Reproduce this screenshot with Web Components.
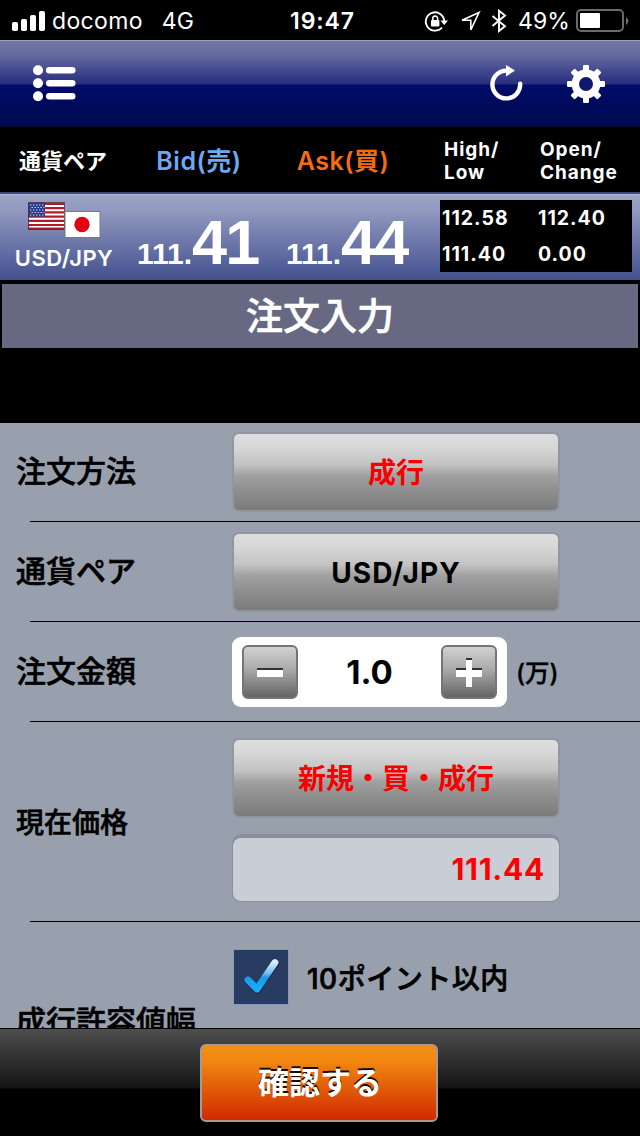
<!DOCTYPE html>
<html lang="ja">
<head>
<meta charset="utf-8">
<title>注文入力</title>
<style>
html, body {
  margin: 0;
  background: #000;
}
body {
  font-family: Inter, "Noto Sans CJK JP", sans-serif;
  width: 640px;
  height: 1136px;
  overflow: hidden;
}
</style>
</head>
<body>
<order-app></order-app>

<script>
"use strict";

function define(tag, html) {
  const template = document.createElement("template");
  template.innerHTML = html;

  customElements.define(
    tag,
    class extends HTMLElement {
      constructor() {
        super();
        this.attachShadow({ mode: "open" });
        this.shadowRoot.appendChild(template.content.cloneNode(true));
      }
    }
  );
}

define(
  "status-bar",
  `
  <style>
  :host {
    display: grid;
    grid-template-columns: 1fr auto 1fr;
    align-items: center;
    height: 40px;
    color: #fff;
    background: #000;
    font-size: 23px;
    line-height: 42px;
    white-space: nowrap;
  }
  svg { display: block; }
  .left, .right { display: flex; align-items: center; }
  .left { padding-left: 12px; }
  .carrier { margin-left: 7px; letter-spacing: 0.35px; }
  .net { margin-left: 19px; }
  .time { font-weight: 600; letter-spacing: 0.9px; padding-left: 5px; }
  .right { justify-content: flex-end; padding-right: 11px; }
  .pct { margin: 0 6px 0 11px; letter-spacing: 0.1px; }
  </style>
  <div class="left">
    <svg width="33" height="20" viewBox="0 0 33 20" fill="#fff">
      <rect x="0" y="11" width="6" height="9" rx="1.8"/>
      <rect x="9" y="8" width="6" height="12" rx="1.8"/>
      <rect x="18" y="4" width="6" height="16" rx="1.8"/>
      <rect x="27" y="0" width="6" height="20" rx="1.8"/>
    </svg>
    <span class="carrier">docomo</span>
    <span class="net">4G</span>
  </div>
  <span class="time">19:47</span>
  <div class="right">
    <svg width="84" height="24" viewBox="0 0 84 24" fill="none" stroke="#fff">
      <path d="M19 18.500A9.200 9.200 0 1 1 21.200 12" stroke-width="1.8"/>
      <path d="M17.400 11.500H25L21.200 16Z" fill="#fff" stroke="none"/>
      <rect x="8" y="11" width="8.400" height="6.400" rx="1" fill="#fff" stroke="none"/>
      <path d="M9.800 11.500V9.400a2.400 2.400 0 0 1 4.800 0V11.500" stroke-width="1.5"/>
      <path d="M56 3.500 39 11.200H47.800V20.800Z" stroke-width="1.6"/>
      <path d="M69.500 7 82 17.200 76 22V1.800L82 6.500 69.500 17" stroke-width="1.9"/>
    </svg>
    <span class="pct">49%</span>
    <svg width="53" height="24" viewBox="0 0 53 24">
      <rect x="1" y="1" width="46" height="21" rx="4" fill="none" stroke="#6b6b6b" stroke-width="2"/>
      <rect x="4" y="4" width="20" height="15" rx="1" fill="#fff"/>
      <path d="M50 8Q55 12 50 16Z" fill="#6b6b6b"/>
    </svg>
  </div>`
);

define(
  "nav-bar",
  `
  <style>
  :host {
    display: flex;
    align-items: center;
    box-sizing: border-box;
    height: 87px;
    padding: 0 35px 0 33px;
    border-top: 1px solid #9ea0b7;
    border-bottom: 1px solid #000530;
    background: linear-gradient(#7377a3 0, #6468a0 15px, #262d7e 43px, #000c68 44px, #00094f 100%);
  }
  svg { display: block; }
  .gap { flex: 1; }
  .gear { margin-left: 44px; }
  </style>
  <svg width="43" height="37" viewBox="0 0 43 37" fill="#fff">
    <circle cx="5" cy="5.2" r="5"/><circle cx="5" cy="18.2" r="5"/><circle cx="5" cy="31.2" r="5"/>
    <rect x="13" y="2" width="29.5" height="6.6" rx="3.3"/>
    <rect x="13" y="15" width="29.5" height="6.6" rx="3.3"/>
    <rect x="13" y="28" width="29.5" height="6.6" rx="3.3"/>
  </svg>
  <span class="gap"></span>
  <svg width="33" height="37" viewBox="0 0 33 37">
    <path d="M30.200 18.800A13.900 13.900 0 1 1 16.300 5.600" fill="none" stroke="#fff" stroke-width="4.4" stroke-linecap="round"/>
    <path d="M16 0 25 5.600 16 11.600Z" fill="#fff"/>
  </svg>
  <svg class="gear" width="38" height="38" viewBox="-19 -19 38 38" fill="#fff">
    <rect x="-3" y="-19" width="6" height="38" rx="1.2"/>
    <rect x="-19" y="-3" width="38" height="6" rx="1.2"/>
    <rect x="-3" y="-19" width="6" height="38" rx="1.2" transform="rotate(45)"/>
    <rect x="-3" y="-19" width="6" height="38" rx="1.2" transform="rotate(-45)"/>
    <circle r="14.4"/>
    <circle r="7" fill="#10186c"/>
  </svg>`
);

define(
  "rate-header",
  `
  <style>
  :host {
    display: grid;
    grid-template-columns: 126px 146px 142px 96px 1fr;
    align-items: center;
    height: 65px;
    color: #fff;
    background: #000;
    font-weight: 600;
    text-align: center;
  }
  .pair { font-size: 22px; margin-top: -2px; }
  .bid, .ask {
    font-size: 25px;
    letter-spacing: 0.5px;
    margin-top: -1px;
  }
  .bid { color: #6ea8f2; }
  .ask { color: #f36c12; }
  .small {
    font-size: 19px;
    font-weight: 700;
    line-height: 23px;
    letter-spacing: 0.95px;
    text-align: left;
    padding: 3px 0 0 30px;
  }
  </style>
  <span class="pair">通貨ペア</span>
  <span class="bid">Bid(売)</span>
  <span class="ask">Ask(買)</span>
  <span class="small">High/<br>Low</span>
  <span class="small">Open/<br>Change</span>`
);

define(
  "flag-pair",
  `
  <style>
  :host { display: block; }
  svg { display: block; }
  </style>
  <svg width="73" height="37" viewBox="0 0 73 37">
    <rect x=".5" y=".5" width="36" height="27" fill="#fff"/>
    <path d="M0 2h36M0 6.200h36M0 10.400h36M0 14.600h36M0 18.800h36M0 23h36M0 26.600h36" stroke="#b01c2c" stroke-width="2.2"/>
    <rect x=".5" y=".5" width="16.5" height="14" fill="#2b3a8c"/>
    <path d="M2 3h15M3.500 5.500h13M2 8h15M3.500 10.500h13M2 13h15" stroke="#dfe3f4" stroke-width="1.2" stroke-dasharray="1.3 1.7"/>
    <rect x=".5" y=".5" width="36" height="27" fill="none" stroke="#4c2638" stroke-opacity=".8"/>
    <rect x="37" y="9.5" width="35" height="26" fill="#fff" stroke="#7b7b84"/>
    <circle cx="54" cy="22.5" r="7.7" fill="#e50012"/>
  </svg>`
);

define(
  "rate-price",
  `
  <style>
  :host {
    display: block;
    font-family: "Liberation Sans", Arial, sans-serif;
    font-weight: bold;
    font-size: 30px;
    line-height: 60px;
    white-space: nowrap;
  }
  ::slotted(b) { font-size: 63px; letter-spacing: -1.8px; }
  </style>
  <slot></slot>`
);

define(
  "rate-row",
  `
  <style>
  :host {
    display: grid;
    grid-template-columns: 137px 149px 154px 192px;
    height: 88px;
    box-sizing: border-box;
    border-top: 2px solid #3b4680;
    color: #fff;
    background: linear-gradient(#b5bad2 0, #9ba2c6 2px, #9299c0 16px, #42508e 100%);
  }
  .pair {
    display: flex;
    flex-direction: column;
    align-items: center;
    padding: 8px 9px 0 0;
    font-size: 22px;
    font-weight: 600;
    letter-spacing: 0.5px;
  }
  .pair span { line-height: 28px; margin-top: 5px; }
  rate-price { padding-top: 18px; }
  .stats {
    display: grid;
    grid-template-columns: 96px 1fr;
    grid-auto-rows: 36px;
    box-sizing: border-box;
    height: 72px;
    margin-top: 6px;
    padding: 0 2px;
    background: #000;
    font-size: 19.5px;
    font-weight: 700;
    letter-spacing: 1px;
    line-height: 37px;
  }
  </style>
  <div class="pair"><flag-pair></flag-pair><span>USD/JPY</span></div>
  <rate-price>111.<b>41</b></rate-price>
  <rate-price>111.<b>44</b></rate-price>
  <div class="stats">
    <span>112.58</span><span>112.40</span>
    <span>111.40</span><span>0.00</span>
  </div>`
);

define(
  "section-title",
  `
  <style>
  :host {
    display: block;
    height: 64px;
    margin: 4px 2px 0;
    color: #fff;
    background: #666981;
    font-size: 37px;
    font-weight: 500;
    line-height: 66px;
    text-align: center;
    -webkit-text-stroke: 0.6px;
  }
  </style>
  <slot></slot>`
);

define(
  "form-row",
  `
  <style>
  :host {
    display: grid;
    grid-template-columns: 232px 1fr;
    align-items: center;
    box-sizing: border-box;
    height: var(--row-height, 100px);
    padding-bottom: 1px;
    background: linear-gradient(#000, #000) 30px 100% / 610px 1px no-repeat;
  }
  .label {
    padding: var(--label-pad, 0 0 2px 16px);
    font-size: var(--label-size, 30px);
    font-weight: 500;
    line-height: 44px;
    white-space: nowrap;
    -webkit-text-stroke: 0.6px;
  }
  .field { display: flex; flex-direction: column; align-items: flex-start; }
  </style>
  <div class="label"><slot name="label"></slot></div>
  <div class="field"><slot></slot></div>`
);

define(
  "metal-button",
  `
  <style>
  :host {
    display: block;
    box-sizing: border-box;
    width: 328px;
    height: 80px;
    padding: 2px;
    border-radius: 7px;
    background: #9196a0;
    color: var(--text, #000);
    font-size: 28px;
    font-weight: 700;
    letter-spacing: var(--spacing, 0);
    text-align: center;
  }
  .face {
    height: 76px;
    border-radius: 5px;
    line-height: 78px;
    background: linear-gradient(#dedede 0, #d8d8d8 15%, #c3c3c3 40%, #a0a0a0 55%, #8e8e8e 75%, #7b7b7b 100%);
  }
  </style>
  <div class="face"><slot></slot></div>`
);

define(
  "amount-stepper",
  `
  <style>
  :host { display: flex; align-items: center; }
  .box {
    display: grid;
    grid-template-columns: 56px 1fr 56px;
    align-items: center;
    box-sizing: border-box;
    width: 275px;
    height: 70px;
    padding: 0 10px;
    border-radius: 9px;
    background: #fff;
    font-size: 33px;
    font-weight: 700;
    text-align: center;
  }
  .value { padding-top: 1px; }
  .key {
    box-sizing: border-box;
    height: 54px;
    border: 2px solid #757575;
    border-radius: 6px;
    background: linear-gradient(#d2d2d2, #a9a9a9 45%, #646464);
  }
  svg { display: block; }
  .unit {
    margin-left: 9px;
    font-size: 24.5px;
    font-weight: 500;
    -webkit-text-stroke: 0.4px;
  }
  </style>
  <div class="box">
    <div class="key">
      <svg width="52" height="50" viewBox="0 0 52 50">
        <path d="M13 21h26v7H13z" fill="#333"/>
        <path d="M13 23h26v7H13z" fill="#fff"/>
      </svg>
    </div>
    <span class="value"><slot></slot></span>
    <div class="key">
      <svg width="52" height="50" viewBox="0 0 52 50">
        <path d="M23 11h6v10h10v7H13v-7h10z" fill="#333"/>
        <path d="M23 13h6v10h10v7H29V40h-6v-10H13v-7h10z" fill="#fff"/>
      </svg>
    </div>
  </div>
  <span class="unit"><slot name="unit"></slot></span>`
);

define(
  "price-field",
  `
  <style>
  :host {
    display: block;
    box-sizing: border-box;
    width: 328px;
    height: 68px;
    margin: 16px 0 3px;
    padding: 4px 1px 1px;
    border-radius: 9px;
    background: #88909c;
  }
  .inner {
    box-sizing: border-box;
    height: 63px;
    padding-right: 14px;
    border-radius: 8px;
    background: #c9cdd5;
    color: #f00;
    font-size: 30px;
    font-weight: 700;
    letter-spacing: 0.7px;
    line-height: 62px;
    text-align: right;
  }
  </style>
  <div class="inner"><slot></slot></div>`
);

define(
  "check-option",
  `
  <style>
  :host {
    display: flex;
    align-items: center;
    margin: -73px 0 0 1px;
    font-size: 28px;
    font-weight: 500;
    letter-spacing: 0.5px;
    -webkit-text-stroke: 0.7px;
  }
  svg { display: block; margin-right: 18px; }
  </style>
  <svg width="56" height="56" viewBox="0 0 56 56">
    <defs>
      <linearGradient id="tick" x1="0" y1="0" x2="0" y2="1">
        <stop offset="0" stop-color="#d8ecff"/>
        <stop offset=".42" stop-color="#6fb9f2"/>
        <stop offset=".55" stop-color="#1a9bea"/>
        <stop offset="1" stop-color="#18aef8"/>
      </linearGradient>
    </defs>
    <rect width="56" height="56" fill="#8698bd"/>
    <rect x="1" y="1" width="54" height="54" fill="#283c61"/>
    <path d="M15.200 32.500 24.200 41.500 42.500 15" fill="none" stroke="#1a2a4c" stroke-width="7" stroke-linecap="round" stroke-linejoin="round"/>
    <path d="M15 31 24 40 42 13.500" fill="none" stroke="url(#tick)" stroke-width="6.8" stroke-linecap="round" stroke-linejoin="round"/>
  </svg>
  <span><slot></slot></span>`
);

define(
  "action-bar",
  `
  <style>
  :host {
    display: flex;
    align-items: flex-start;
    justify-content: center;
    box-sizing: border-box;
    height: 108px;
    padding: 15px 2px 0 0;
    border-top: 1px solid #000;
    background: linear-gradient(#4e4e4e 0, #141414 59px, #000 60px);
  }
  .button {
    box-sizing: border-box;
    width: 238px;
    height: 78px;
    border: 2px solid #a89a90;
    border-radius: 6px;
    background: linear-gradient(#f38f15 0, #f18712 20%, #d02a00 100%);
    color: #fff;
    font-size: 31px;
    font-weight: 700;
    line-height: 74px;
    text-align: center;
    text-indent: 2px;
    text-shadow: 0 -2px 0 #1c0c00;
  }
  </style>
  <div class="button"><slot></slot></div>`
);

define(
  "order-app",
  `
  <style>
  :host {
    display: flex;
    flex-direction: column;
    height: 1136px;
    background: #000;
  }
  .form {
    height: 605px;
    margin-top: 75px;
    overflow: hidden;
    background: #97a0ac;
    color: #000;
  }
  .first { --row-height: 99px; }
  .tall { --row-height: 200px; }
  .price { --label-size: 28px; --label-pad: 3px 0 0 16px; }
  .check { --label-pad: 0 0 2px 16px; }
  .red { --text: #f60000; }
  .latin { --spacing: 1.1px; }
  </style>
  <status-bar></status-bar>
  <nav-bar></nav-bar>
  <rate-header></rate-header>
  <rate-row></rate-row>
  <section-title>注文入力</section-title>
  <div class="form">
    <form-row class="first">
      <span slot="label">注文方法</span>
      <metal-button class="red">成行</metal-button>
    </form-row>
    <form-row>
      <span slot="label">通貨ペア</span>
      <metal-button class="latin">USD/JPY</metal-button>
    </form-row>
    <form-row>
      <span slot="label">注文金額</span>
      <amount-stepper>1.0<span slot="unit">(万)</span></amount-stepper>
    </form-row>
    <form-row class="tall price">
      <span slot="label">現在価格</span>
      <metal-button class="red">新規・買・成行</metal-button>
      <price-field>111.44</price-field>
    </form-row>
    <form-row class="tall check">
      <span slot="label">成行許容値幅</span>
      <check-option>10ポイント以内</check-option>
    </form-row>
  </div>
  <action-bar>確認する</action-bar>`
);
</script>
</body>
</html>
